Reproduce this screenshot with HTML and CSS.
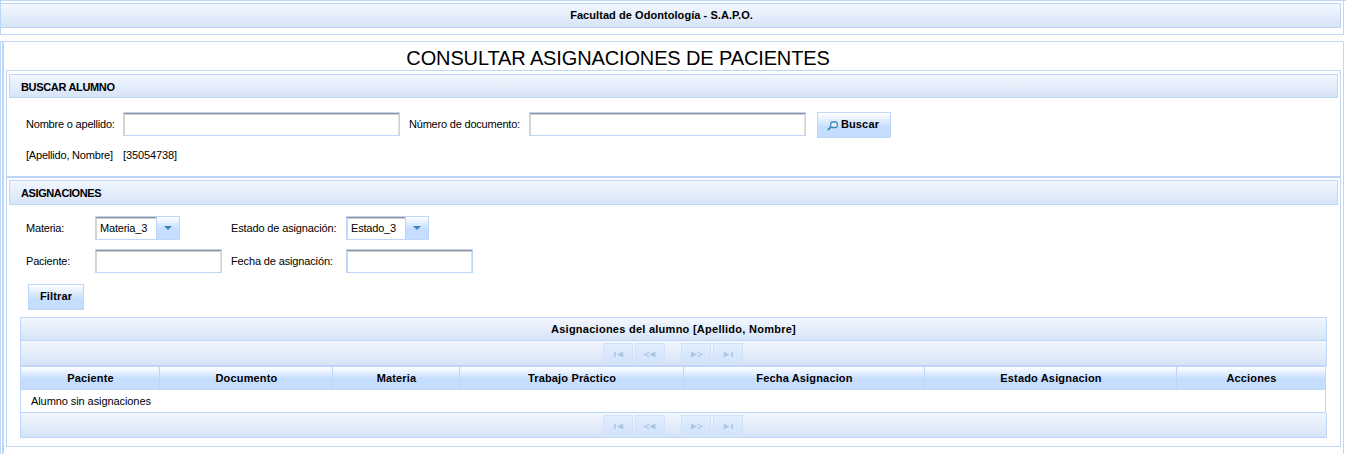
FILE: index.html
```html
<!DOCTYPE html>
<html lang="es">
<head>
<meta charset="utf-8">
<title>Facultad de Odontología - S.A.P.O.</title>
<link rel="stylesheet" href="styles.css">
</head>
<body>
<svg class="defs" width="0" height="0" aria-hidden="true">
  <symbol id="first" viewBox="0 0 28 18"><path d="M10 8h1.7v5H10zM19.2 7.5v6L13 10.5z" fill="currentColor"/></symbol>
  <symbol id="prev" viewBox="0 0 28 18"><path d="M19.5 7.5v6L13 10.5z" fill="currentColor"/><path d="M13 8.2L8.5 10.5l4.500 2.300" fill="none" stroke="currentColor" stroke-width="1.200"/></symbol>
  <symbol id="next" viewBox="0 0 28 18"><path d="M9 7.5v6l6.500-3z" fill="currentColor"/><path d="M15.500 8.200l4.500 2.300-4.500 2.300" fill="none" stroke="currentColor" stroke-width="1.200"/></symbol>
  <symbol id="last" viewBox="0 0 28 18"><path d="M9.500 7.500v6l6.200-3zM17.300 8H19v5h-1.700z" fill="currentColor"/></symbol>
</svg>
<header class="banner"><div class="bar banner-title">Facultad de Odontología - S.A.P.O.</div></header>
<main class="page">
  <h1 class="title">CONSULTAR ASIGNACIONES DE PACIENTES</h1>
  <section class="panel search">
    <h2 class="bar heading">BUSCAR ALUMNO</h2>
    <div class="search-grid">
      <label for="nombre">Nombre o apellido:</label><input id="nombre" class="field">
      <label for="documento">Número de documento:</label><input id="documento" class="field">
      <button class="button buscar"><svg class="lens" width="11" height="10" viewBox="0 0 11 10"><rect x="3.700" y="1" width="6.500" height="5.500" rx="1.600" fill="#e4f2fb" stroke="#3d87b8" stroke-width="1.300"/><path d="M4 6L.8 9" stroke="#3d87b8" stroke-width="1.800"/></svg>Buscar</button>
      <span>[Apellido, Nombre]</span><span class="document-value">[35054738]</span>
    </div>
  </section>
  <section class="panel assignments">
    <h2 class="bar heading heading-tall">ASIGNACIONES</h2>
    <div class="filter-grid">
      <span>Materia:</span>
      <div class="combo"><span class="field combo-value">Materia_3</span><span class="combo-arrow"></span></div>
      <span class="wide">Estado de asignación:</span>
      <div class="combo combo-estado"><span class="field combo-value">Estado_3</span><span class="combo-arrow"></span></div>
      <label for="paciente">Paciente:</label><input id="paciente" class="field">
      <label class="wide" for="fecha">Fecha de asignación:</label><input id="fecha" class="field">
    </div>
    <button class="button filtrar">Filtrar</button>
    <div class="results">
      <div class="bar caption">Asignaciones del alumno [Apellido, Nombre]</div>
      <div class="bar pager">
        <span class="page-button"><svg><use href="#first"/></svg></span><span class="page-button"><svg><use href="#prev"/></svg></span><span class="page-button page-next"><svg><use href="#next"/></svg></span><span class="page-button"><svg><use href="#last"/></svg></span>
      </div>
      <div class="table">
        <div class="columns"><span>Paciente</span><span>Documento</span><span>Materia</span><span>Trabajo Práctico</span><span>Fecha Asignacion</span><span>Estado Asignacion</span><span>Acciones</span></div>
        <div class="empty">Alumno sin asignaciones</div>
      </div>
      <div class="bar pager pager-bottom">
        <span class="page-button"><svg><use href="#first"/></svg></span><span class="page-button"><svg><use href="#prev"/></svg></span><span class="page-button page-next"><svg><use href="#next"/></svg></span><span class="page-button"><svg><use href="#last"/></svg></span>
      </div>
    </div>
  </section>
</main>
</body>
</html>
```
FILE: styles.css
```css
* { box-sizing: border-box; }
html { background: #fff; }
body {
  height: 454px;
  margin: 0;
  overflow: hidden;
  border-top: 1px solid #bed6f8;
  color: #000;
  font: 11px/14px "Liberation Sans", Arial, sans-serif;
  letter-spacing: -0.2px;
}
.defs { display: block; height: 0; }
.bar {
  border: 1px solid #bed6f8;
  background: linear-gradient(#f3f7fe, #d6e4f7);
}
.banner {
  width: 1344px;
  height: 34px;
  padding: 2px 2px 0 0;
  border: 1px solid #bed6f8;
  border-top: 0;
}
.banner-title {
  height: 25px;
  padding: 4px 18px 0 0;
  border-left: 0;
  text-align: center;
  font-weight: bold;
  letter-spacing: 0.06px;
}
.page {
  width: 1344px;
  height: 430px;
  margin-top: 6px;
  padding-left: 5px;
  padding-right: 2px;
  border: 1px solid #bed6f8;
  background: linear-gradient(#bed6f8, #bed6f8) 1px 0 / 2px 100% no-repeat;
}
.title {
  height: 28px;
  margin: 0;
  padding: 4px 111px 0 0;
  text-align: center;
  font-size: 20px;
  font-weight: normal;
  line-height: 24px;
  letter-spacing: -0.13px;
}
.panel {
  width: 1335px;
  border: 1px solid #bed6f8;
}
.search { height: 107px; padding: 3px 2px 0; }
.assignments { height: 270px; padding: 2px 2px 0; }
.heading {
  height: 24px;
  margin: 0;
  padding: 5px 11px 0;
  font-size: 11px;
  line-height: 14px;
  letter-spacing: -0.33px;
}
.heading-tall { height: 25px; letter-spacing: -0.4px; }
.search-grid {
  display: grid;
  grid-template-columns: 97px 286px 120px 288px 74px;
  grid-template-rows: 26px 22px;
  row-gap: 7px;
  padding: 14px 0 0 17px;
}
.search-grid > label { padding-top: 5px; }
.search-grid > span { padding-top: 3px; }
.search-grid > .document-value { letter-spacing: -0.1px; }
.field {
  width: 277px;
  height: 24px;
  padding: 0 3px;
  border: 1px solid #bed6f8;
  border-radius: 0;
  outline: none;
  background: #fff;
  box-shadow: inset 0 1px #8f9296, inset 0 2px #cfd0d2, inset 1px 0 #d5d5d5, inset -1px 0 #dfdfdf;
  font: inherit;
}
.button {
  display: flex;
  align-items: center;
  justify-content: center;
  height: 26px;
  padding: 0 0 2px;
  border: 1px solid #bed6f8;
  background: linear-gradient(#fff, #c5ddff 60%);
  color: #000;
  font: bold 11px/14px "Liberation Sans", Arial, sans-serif;
  letter-spacing: 0.15px;
}
.buscar { width: 74px; padding-right: 2px; }
.lens { margin: 3px 3px 0 0; }
.filter-grid {
  display: grid;
  grid-template-columns: 69px 136px 115px 127px;
  grid-template-rows: 24px 24px;
  row-gap: 9px;
  padding: 11px 0 0 17px;
}
.filter-grid > span, .filter-grid > label { padding-top: 5px; }
.filter-grid > .wide { letter-spacing: -0.14px; }
.filter-grid .field { width: 127px; }
.combo { display: flex; width: 85px; height: 24px; }
.filter-grid .combo-value {
  width: 61px;
  padding: 4px 0 0 4px;
  border-right: 0;
  box-shadow: inset 0 1px #8f9296, inset 0 2px #cfd0d2, inset 1px 0 #d5d5d5;
  letter-spacing: -0.2px;
}
.combo-arrow {
  display: flex;
  align-items: center;
  justify-content: center;
  width: 24px;
  border: 1px solid #bed6f8;
  background: linear-gradient(#fff, #c5ddff 55%);
}
.combo-arrow::before {
  content: "";
  border: solid transparent;
  border-width: 4px 4px 0;
  border-top-color: #3d87b8;
}
.combo-estado { width: 83px; }
.filter-grid .combo-estado .combo-value { width: 59px; }
.filtrar { width: 56px; margin: 11px 0 0 19px; }
.results { width: 1307px; margin: 7px 0 0 11px; }
.caption {
  height: 24px;
  padding-top: 4px;
  text-align: center;
  font-weight: bold;
  letter-spacing: 0.26px;
}
.pager {
  display: flex;
  gap: 2px;
  height: 25px;
  padding: 2px 0 0 582px;
  border-top: 0;
}
.page-button {
  width: 30px;
  height: 20px;
  border: 1px solid #d0e2fb;
  background: linear-gradient(#e2eefd, #d2e3fb);
  color: #a8c8e3;
}
.page-button svg { display: block; width: 28px; height: 18px; }
.page-next { margin-left: 14px; }
.table {
  width: 1306px;
  border: 1px solid #bed6f8;
}
.columns {
  display: grid;
  grid-template-columns: 139px 173px 127px 224px 241px 252px 148px;
  height: 23px;
  border-bottom: 1px solid #bed6f8;
  background: linear-gradient(#fff, #c5ddff 55%);
  text-align: center;
  font-weight: bold;
  letter-spacing: 0.16px;
}
.columns span { padding: 4px 0 0 1px; border-right: 1px solid #bed6f8; }
.columns span:last-child { border-right: 0; }
.empty { height: 22px; padding: 4px 10px; letter-spacing: -0.08px; }
```
